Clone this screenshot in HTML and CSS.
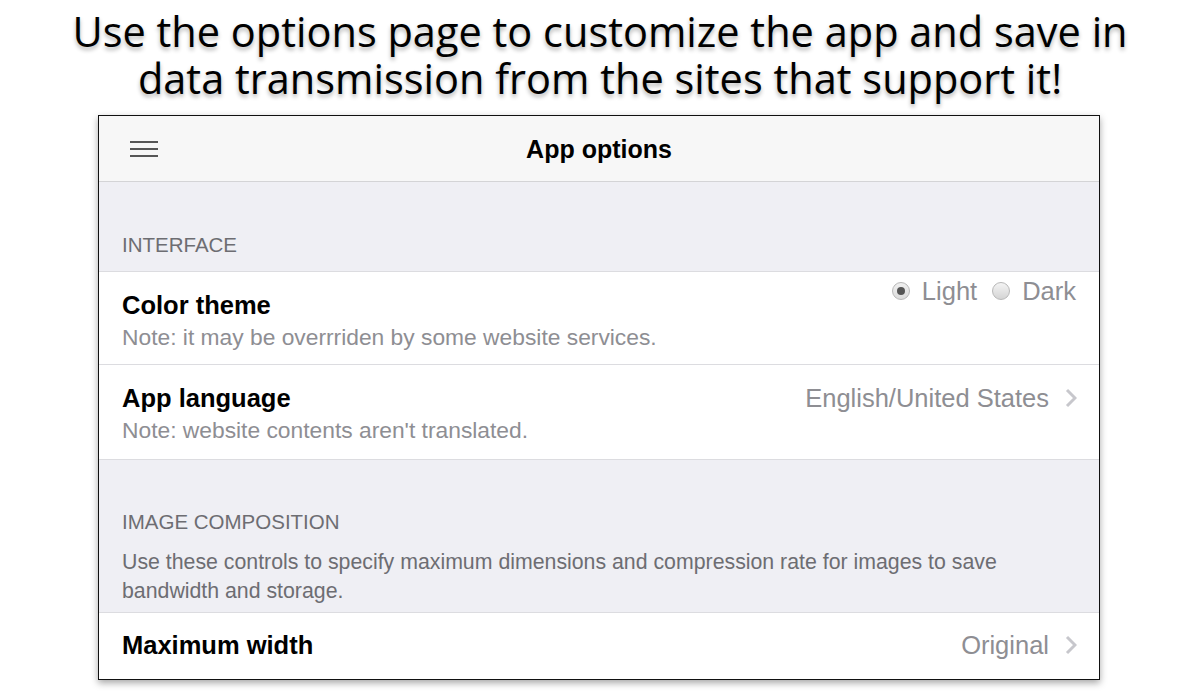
FILE: index.html
```html
<!DOCTYPE html>
<html>
<head>
<meta charset="utf-8">
<link rel="stylesheet" href="styles.css">
</head>
<body>
<h1 class="headline">Use the options page to customize the app and save in<br>data transmission from the sites that support it!</h1>
<div class="window">
  <div class="titlebar">
    <svg class="menu-icon" width="28" height="16" viewBox="0 0 28 16"><path d="M0 1h28M0 8h28M0 15h28" stroke="#222" stroke-width="1.4"/></svg>
    <div class="title">App options</div>
  </div>
  <div class="section">
    <div class="section-head">INTERFACE</div>
  </div>
  <div class="row">
    <div class="row-main">
      <div class="row-title">Color theme</div>
      <div class="row-note">Note: it may be overrriden by some website services.</div>
    </div>
    <div class="radios">
      <span class="radio checked"></span><span class="radio-label">Light</span>
      <span class="radio"></span><span class="radio-label">Dark</span>
    </div>
  </div>
  <div class="row row-second">
    <div class="row-main">
      <div class="row-title">App language</div>
      <div class="row-note">Note: website contents aren't translated.</div>
    </div>
    <div class="value">English/United States
      <svg class="chev" width="12" height="20" viewBox="0 0 12 20"><path d="M2 2l8 8-8 8" fill="none" stroke="#c7c7cc" stroke-width="3"/></svg>
    </div>
  </div>
  <div class="section section-tall">
    <div class="section-head">IMAGE COMPOSITION</div>
    <div class="section-desc">Use these controls to specify maximum dimensions and compression rate for images to save bandwidth and storage.</div>
  </div>
  <div class="row row-last">
    <div class="row-main">
      <div class="row-title">Maximum width</div>
    </div>
    <div class="value">Original
      <svg class="chev" width="12" height="20" viewBox="0 0 12 20"><path d="M2 2l8 8-8 8" fill="none" stroke="#c7c7cc" stroke-width="3"/></svg>
    </div>
  </div>
</div>
</body>
</html>
```
FILE: styles.css
```css
html, body {
  margin: 0;
  padding: 0;
  background: #fff;
}
body {
  width: 1200px;
  height: 700px;
  overflow: hidden;
}
.headline {
  margin: 0;
  padding-top: 8px;
  height: 106px;
  box-sizing: border-box;
  font-family: "Open Sans", "Noto Sans", sans-serif;
  font-weight: 400;
  font-size: 41.5px;
  line-height: 47px;
  text-align: center;
  color: #000;
  text-shadow: 0 3px 4px rgba(0, 0, 0, 0.3);
  white-space: nowrap;
}
.window {
  margin: 9px 0 0 98px;
  width: 1000px;
  border: 1px solid #111;
  box-shadow: 0 3px 7px rgba(0, 0, 0, 0.35);
  font-family: "Liberation Sans", Arial, sans-serif;
  background: #fff;
}
.titlebar {
  position: relative;
  height: 66px;
  box-sizing: border-box;
  padding-top: 2px;
  background: #f7f7f7;
  border-bottom: 1px solid #d4d4d6;
  display: flex;
  align-items: center;
  justify-content: center;
}
.menu-icon {
  position: absolute;
  left: 31px;
  top: 25px;
}
.title {
  font-weight: 700;
  font-size: 25px;
  color: #000;
}
.section {
  background: #efeff4;
  padding: 51px 23px 14px;
  border-bottom: 1px solid #dcdce0;
}
.section-tall {
  padding-top: 50px;
  padding-bottom: 6px;
}
.section-head {
  font-size: 20.5px;
  line-height: 24px;
  color: #6d6d72;
}
.section-desc {
  margin-top: 14px;
  font-size: 21.3px;
  line-height: 29px;
  color: #6d6d72;
}
.row {
  display: flex;
  align-items: flex-start;
  justify-content: space-between;
  padding: 18px 23px 13px;
  border-bottom: 1px solid #dcdce0;
}
.row-second {
  padding-bottom: 15px;
}
.row-last {
  border-bottom: none;
  padding: 17px 23px 19px;
}
.row-title {
  font-weight: 700;
  font-size: 25.5px;
  line-height: 30px;
  color: #000;
}
.row-note {
  margin-top: 3px;
  font-size: 22.8px;
  line-height: 28px;
  color: #8e8e93;
}
.value {
  display: flex;
  align-items: center;
  font-size: 25.5px;
  line-height: 30px;
  color: #8e8e93;
}
.chev {
  margin-left: 16px;
  margin-right: -1px;
}
.radios {
  display: flex;
  align-items: center;
  margin-top: -14px;
  font-size: 25.5px;
  line-height: 30px;
  color: #8e8e93;
}
.radio {
  width: 18px;
  height: 18px;
  border-radius: 50%;
  box-sizing: border-box;
  border: 1px solid #b8b8b8;
  background: linear-gradient(#f4f4f4, #d4d4d4);
  display: flex;
  align-items: center;
  justify-content: center;
  margin: 0 12px 0 15px;
}
.radio.checked::after {
  content: "";
  width: 8px;
  height: 8px;
  border-radius: 50%;
  background: #555;
}
.radio.checked {
  margin-left: 0;
  background: linear-gradient(#f0f0f0, #dcdcdc);
}
.radio-label {
  display: inline-block;
}
```
